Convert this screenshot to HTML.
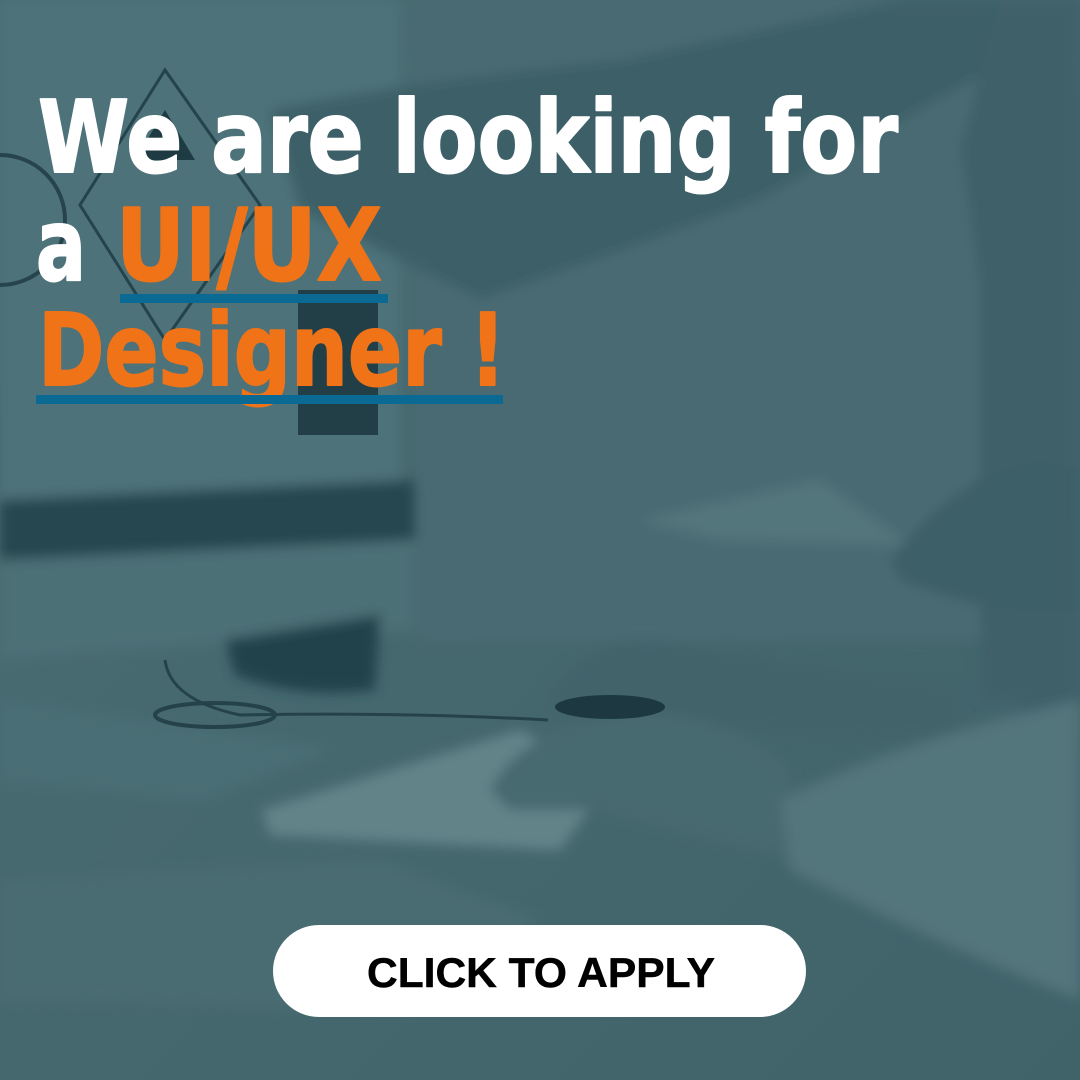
<!DOCTYPE html>
<html><head><meta charset="utf-8"><style>
html,body{margin:0;padding:0;width:1080px;height:1080px;overflow:hidden;background:#44676e}
svg{display:block}
</style></head><body>
<svg width="1080" height="1080" viewBox="0 0 1080 1080" xmlns="http://www.w3.org/2000/svg">
<defs>
<linearGradient id="bg" x1="0" y1="0" x2="1" y2="1">
<stop offset="0" stop-color="#4a6d74"/><stop offset="0.5" stop-color="#45686e"/><stop offset="1" stop-color="#40636a"/>
</linearGradient>
<filter id="bl"><feGaussianBlur stdDeviation="6"/></filter>
</defs>
<rect width="1080" height="1080" fill="url(#bg)"/>
<g filter="url(#bl)">
<rect x="420" y="0" width="560" height="640" fill="#486b72"/>
<rect x="980" y="0" width="100" height="700" fill="#3f6169"/>
<polygon points="0,0 400,0 400,495 0,510" fill="#4e7279"/>
<polygon points="0,500 415,480 415,540 0,560" fill="#27464f"/>
<polygon points="0,560 415,540 415,630 0,660" fill="#4b6f76"/>
<path d="M225,640 L380,615 L375,690 Q300,700 235,675 Z" fill="#24434c"/>
<polygon points="0,700 330,750 200,800 0,780" fill="#4a6e74"/>
<path d="M270,110 Q420,80 620,60 L900,0 L1020,0 L1010,60 L760,200 Q600,260 480,300 L300,210 Z" fill="#3d6068"/>
<path d="M1000,0 L1080,0 L1080,720 L1020,720 Q1000,400 960,150 Z" fill="#3f6169"/>
<polygon points="640,520 820,480 910,545 720,540" fill="#52767c"/>
<path d="M890,560 Q960,470 1040,460 L1080,470 L1080,610 Q1000,620 900,580 Z" fill="#3e5f67"/>
<path d="M545,700 Q580,640 650,640 Q760,660 960,690 L960,740 Q800,740 680,720 L560,720 Z" fill="#42646b"/>
<polygon points="262,810 520,730 610,780 560,850 270,835" fill="#628489"/>
<path d="M490,790 Q520,730 620,715 Q720,705 790,770 L800,860 Q700,840 600,810 L510,810 Z" fill="#47696f"/>
<path d="M780,800 Q900,740 1080,700 L1080,1000 Q950,950 790,870 Z" fill="#52757b"/>
<polygon points="0,880 380,860 540,920 360,1010 0,1000" fill="#496c72"/>
</g>
<ellipse cx="610" cy="707" rx="55" ry="12" fill="#1d3841"/>
<path d="M165,660 Q170,700 240,715 Q400,712 548,720" fill="none" stroke="#25424b" stroke-width="3"/>
<ellipse cx="215" cy="715" rx="60" ry="12" fill="none" stroke="#25424b" stroke-width="4"/>
<polygon points="165,70 260,205 165,340 80,205" fill="none" stroke="#24434c" stroke-width="3"/>
<polygon points="165,110 195,160 135,160" fill="#1e3b44"/>
<rect x="298" y="290" width="80" height="145" fill="#223f48"/>
<circle cx="0" cy="220" r="65" fill="none" stroke="#27444d" stroke-width="4"/>

<g font-family="'DejaVu Sans','Liberation Sans',sans-serif" font-weight="bold" stroke-width="2" stroke-linejoin="round">
<text x="38" y="172" font-size="100" fill="#ffffff" stroke="#ffffff" textLength="860" lengthAdjust="spacingAndGlyphs">We are looking for</text>
<text x="36" y="280" font-size="100" fill="#ffffff" stroke="#ffffff" textLength="50" lengthAdjust="spacingAndGlyphs">a</text>
<text x="116" y="280" font-size="100" fill="#f07318" stroke="#f07318" textLength="266" lengthAdjust="spacingAndGlyphs">UI/UX</text>
<text x="38" y="385" font-size="100" fill="#f07318" stroke="#f07318" textLength="468" lengthAdjust="spacingAndGlyphs">Designer !</text>
</g>
<rect x="120" y="294" width="268" height="9" fill="#0a6a93"/>
<rect x="36" y="395" width="467" height="9" fill="#0a6a93"/>
<rect x="273" y="925" width="533" height="92" rx="46" ry="46" fill="#ffffff"/>
<text x="367" y="987" font-family="'Liberation Sans',Arial,sans-serif" font-weight="bold" font-size="42" fill="#000" stroke="#000" stroke-width="0.5" textLength="348" lengthAdjust="spacingAndGlyphs">CLICK TO APPLY</text>
</svg>
</body></html>
